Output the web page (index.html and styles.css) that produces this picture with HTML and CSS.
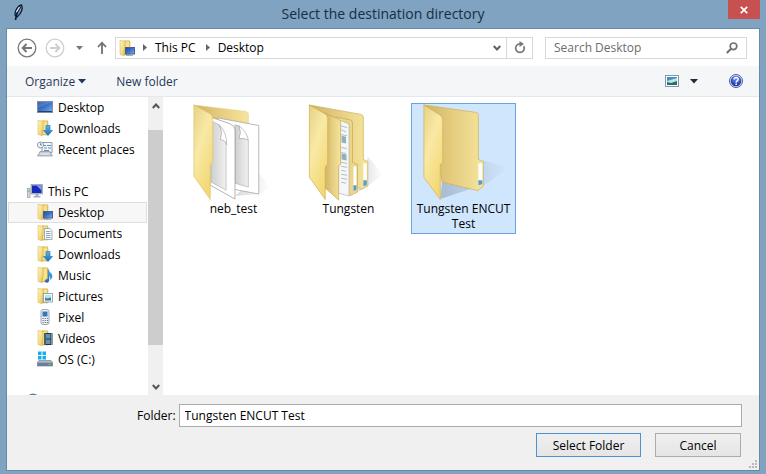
FILE: index.html
```html
<!DOCTYPE html>
<html lang="en">
<head>
<meta charset="utf-8">
<title>Select the destination directory</title>
<link rel="stylesheet" href="styles.css">
</head>
<body>
<svg class="defs" aria-hidden="true">
  <defs>
    <linearGradient id="gold" x1="0" y1="0" x2="1" y2="1"><stop offset="0" stop-color="#fdf3bd"/><stop offset=".5" stop-color="#f6e08a"/><stop offset="1" stop-color="#e2c060"/></linearGradient>
    <linearGradient id="flap" x1="0" y1="0" x2=".6" y2="1"><stop offset="0" stop-color="#e6d285"/><stop offset=".45" stop-color="#f8e9a5"/><stop offset="1" stop-color="#f3d772"/></linearGradient>
    <linearGradient id="inside" x1="0" y1="0" x2="1" y2="0"><stop offset="0" stop-color="#cdb262"/><stop offset=".5" stop-color="#e6cd80"/><stop offset="1" stop-color="#f5e59d"/></linearGradient>
    <linearGradient id="sheet" x1="0" y1="0" x2="1" y2="0"><stop offset="0" stop-color="#cfcfcf"/><stop offset="1" stop-color="#f1f1f1"/></linearGradient>
    <linearGradient id="shade" x1="0" y1="0" x2="1" y2="0"><stop offset="0" stop-color="#2c3a4c" stop-opacity=".38"/><stop offset="1" stop-color="#2c3a4c" stop-opacity="0"/></linearGradient>
    <linearGradient id="screen" x1="0" y1="0" x2="1" y2="1"><stop offset="0" stop-color="#1b459c"/><stop offset=".5" stop-color="#3b74cc"/><stop offset="1" stop-color="#84b3e6"/></linearGradient>
    <linearGradient id="blue" x1="0" y1="0" x2="0" y2="1"><stop offset="0" stop-color="#59baf0"/><stop offset="1" stop-color="#1769bb"/></linearGradient>
    <radialGradient id="ball" cx=".5" cy=".3" r=".7"><stop offset="0" stop-color="#6f8fe8"/><stop offset="1" stop-color="#1a2f9e"/></radialGradient>
    <symbol id="folder" viewBox="0 0 16 16">
      <path d="M5 .8h5.500l.5 1V15H5z" fill="#e3c15c" stroke="#cdac50" stroke-width=".5"/>
      <path d="M6.500 1.500H10V14H6z" fill="#f6e290"/>
      <path d="M1 .3l5 1v8.500l-.8.800v5.200L1 14.500z" fill="url(#gold)" stroke="#d4b251" stroke-width=".5"/>
    </symbol>
    <symbol id="i-desk" viewBox="0 0 16 16">
      <rect x=".5" y="2.500" width="15" height="11" fill="url(#screen)" stroke="#7d8ea8"/>
      <path d="M1 3h14L1 9z" fill="#fff" opacity=".15"/><path d="M1 12.500h14" stroke="#2a3f66"/>
    </symbol>
    <symbol id="i-fdesk" viewBox="0 0 16 16"><use href="#folder"/><rect x="6.500" y="7.500" width="9" height="6.500" fill="url(#screen)" stroke="#46618c"/><path d="M7 15.300h7" stroke="#7fa0c8"/></symbol>
    <symbol id="i-down" viewBox="0 0 16 16"><use href="#folder"/><path d="M9 5.500h4v5h2.500L11 15.500 6.500 10.500H9z" fill="url(#blue)" stroke="#2a7dbf" stroke-width=".7"/></symbol>
    <symbol id="i-recent" viewBox="0 0 16 16">
      <path d="M5 1.500h10v10H5z" fill="#f4f7fa" stroke="#8b9cae"/><path d="M7 4.500h2m1 0h4M7 7h3m1 0h3M7 9.500h5" stroke="#6688aa"/>
      <path d="M3 10.500h10l2.500 4.500H.5z" fill="#c3ccd5" stroke="#8794a2" stroke-width=".7"/><path d="M3.500 13h9" stroke="#edf2f7"/>
      <circle cx="3.500" cy="4" r="3" fill="#f4f7fa" stroke="#8799ad"/><path d="M3.500 2.200V4H5" fill="none" stroke="#506a86" stroke-width=".8"/>
    </symbol>
    <symbol id="i-pc" viewBox="0 0 16 16">
      <rect x=".5" y="5.500" width="2.500" height="9" fill="#d8dde2" stroke="#8c969f" stroke-width=".7"/><path d="M1 8h1.500" stroke="#65a53f"/>
      <rect x="4" y="1.500" width="11.500" height="9.500" fill="#b5c0d0" stroke="#7f8da1" stroke-width=".6"/><rect x="5" y="2.500" width="9.500" height="7.500" fill="#1629ba"/><path d="M9.500 2.500h5v5z" fill="#829ae8"/>
      <path d="M8.500 11h3v2h2v1.500h-7V13h2z" fill="#a6b0bd"/>
    </symbol>
    <symbol id="i-doc" viewBox="0 0 16 16"><use href="#folder"/><path d="M7.500 3.500H13L15 5.500v9H7.500z" fill="#f8fbfd" stroke="#8a9aa9" stroke-width=".8"/><path d="M9 6.500h4.500M9 8.500h4.500M9 10.500h4.500M9 12.500h4.500" stroke="#768da7" stroke-width=".8"/></symbol>
    <symbol id="i-music" viewBox="0 0 16 16"><use href="#folder"/><path d="M11 2c.5 3 4 4 4 7 0 1.500-.5 2.500-1.500 3.500.5-3-1.500-4-1.500-4v5c0 2.500-4 2.500-4 .5 0-1.500 2-2 3-1.500z" fill="url(#blue)" stroke="#286ca5" stroke-width=".4"/></symbol>
    <symbol id="i-pic" viewBox="0 0 16 16"><use href="#folder"/><rect x="6.500" y="5.500" width="9" height="8.500" fill="#f5fbff" stroke="#7c98ae" stroke-width=".8"/><path d="M8 7h6v5.500H8z" fill="#b7e2f0"/><path d="M8 9.500l2 1 4-1v3H8z" fill="#427f9f"/></symbol>
    <symbol id="i-phone" viewBox="0 0 16 16"><rect x="4" y=".5" width="8" height="15" rx="2" fill="#edf0f5" stroke="#8995a8" stroke-width=".8"/><rect x="5.500" y="2.500" width="5" height="5" fill="#3e73b7"/><path d="M5.500 9.500h1.200m1 0h1.200m1 0h1.200m-5.600 2h1.200m1 0h1.200m1 0h1.200m-5.600 2h1.200m1 0h1.200m1 0h1.200" stroke="#65758f"/></symbol>
    <symbol id="i-video" viewBox="0 0 16 16"><use href="#folder"/><rect x="7" y="3" width="8.500" height="12" fill="#29323b"/><path d="M9 4h4.500v4.500H9zM9 9.500h4.500V14H9z" fill="#5996ba"/><path d="M8 3.500v11M14.500 3.500v11" stroke="#dbe4eb" stroke-dasharray="1 1"/></symbol>
    <symbol id="i-drive" viewBox="0 0 16 16"><path d="M1 .5h3.500V4H1zm4.500 0H9V4H5.500zM1 5h3.500v3.500H1zm4.500 0H9v3.500H5.500z" fill="#16aee9"/><path d="M2 9.500h12l1.800 2v3.500H.2v-3.500z" fill="#a9b8c6" stroke="#687a8c" stroke-width=".6"/><path d="M.5 11.700h15V15H.5z" fill="#687f96"/><path d="M11.500 13.300h2.500" stroke="#67df4b"/></symbol>
    <symbol id="i-net" viewBox="0 0 16 16"><circle cx="6" cy="7.500" r="7" fill="#4c86ad"/><path d="M2 5q4-3 8 0" fill="none" stroke="#b8dced"/></symbol>
  </defs>
</svg>

<div class="window">
  <header class="titlebar">
    <svg class="feather" width="16" height="18" viewBox="0 0 16 18" aria-hidden="true"><path d="M4 11C3.500 6 7.500 1.500 10.500 1c1.500 3 .5 8-4.500 12z" fill="#6f9ed2" stroke="#0c1524" stroke-width="1.300"/><path d="M9.500 3Q5.500 8 4.500 16" fill="none" stroke="#0c1524" stroke-width="1.600"/><path d="M8.500 3L5.500 8" stroke="#edf6ff" stroke-width="1.200"/></svg>
    <h1>Select the destination directory</h1>
    <button class="close" type="button" aria-label="Close"><svg width="8" height="8" viewBox="0 0 8 8"><path d="M.8.8l6.400 6.400M7.200.8L.8 7.200" stroke="#fff" stroke-width="1.700"/></svg></button>
  </header>

  <main class="dialog">
    <nav class="navbar" aria-label="Navigation">
      <button class="plain round" type="button" aria-label="Back"><svg width="20" height="20" viewBox="0 0 20 20" fill="none" stroke="#777"><circle cx="10" cy="10" r="8.800" stroke-width="1.300"/><path d="M15 10H6M9.500 6L5.700 10l3.800 4" stroke-width="2"/></svg></button>
      <button class="plain round" type="button" aria-label="Forward"><svg width="20" height="20" viewBox="0 0 20 20" fill="none" stroke="#cfcfcf"><circle cx="10" cy="10" r="8.800" stroke-width="1.300"/><path d="M5 10h9m-3.500-4l3.800 4-3.800 4" stroke-width="2"/></svg></button>
      <button class="plain history" type="button" aria-label="Recent locations"><svg width="7" height="4" viewBox="0 0 7 4"><path d="M0 0h7L3.500 4z" fill="#777"/></svg></button>
      <button class="plain up" type="button" aria-label="Up"><svg width="10" height="13" viewBox="0 0 10 13" fill="none" stroke="#707070" stroke-width="1.800"><path d="M5 13V2M1 6l4-4.300L9 6"/></svg></button>
      <div class="address">
        <svg class="ico" aria-hidden="true"><use href="#i-fdesk"/></svg>
        <svg class="chev" viewBox="0 0 4 7"><path d="M0 0l4 3.500L0 7z"/></svg>
        <a href="#">This PC</a>
        <svg class="chev" viewBox="0 0 4 7"><path d="M0 0l4 3.500L0 7z"/></svg>
        <a href="#">Desktop</a>
        <button class="plain drop" type="button" aria-label="Previous locations"><svg width="8" height="6" viewBox="0 0 8 6"><path d="M.8 1L4 4.500 7.200 1" fill="none" stroke="#606060" stroke-width="2"/></svg></button>
        <button class="plain refresh" type="button" aria-label="Refresh"><svg width="12" height="13" viewBox="0 0 12 13"><path d="M9.800 5.200A4.300 4.300 0 1 1 6 2.800" fill="none" stroke="#777" stroke-width="1.700"/><path d="M5.500 0l4.500 3-4.500 3z" fill="#777"/></svg></button>
      </div>
      <div class="search">
        <input type="search" placeholder="Search Desktop" aria-label="Search Desktop">
        <svg width="12" height="12" viewBox="0 0 12 12" fill="none" stroke="#707070" aria-hidden="true"><circle cx="7.500" cy="4.300" r="3.300" stroke-width="1.700"/><path d="M5 6.800L.8 11" stroke-width="2"/></svg>
      </div>
    </nav>

    <div class="toolbar">
      <button class="plain" type="button">Organize <svg width="8" height="5" viewBox="0 0 8 5"><path d="M0 0h8L4 4.500z" fill="#1e395b"/></svg></button>
      <button class="plain" type="button">New folder</button>
      <button class="plain view" type="button" aria-label="Change your view"><svg width="14" height="12" viewBox="0 0 14 12"><rect x=".5" y=".5" width="13" height="11" fill="#fff" stroke="#8795a5"/><path d="M2 2h10v8H2z" fill="#b5e6f2"/><path d="M2 2h10v1L2 6z" fill="#4b8fc0"/><path d="M2 7l4 1 6-2v4H2z" fill="#26706b"/></svg></button>
      <button class="plain more" type="button" aria-label="More options"><svg width="8" height="5" viewBox="0 0 8 5"><path d="M0 0h8L4 4.500z" fill="#1b2b42"/></svg></button>
      <button class="plain help" type="button" aria-label="Help"><svg width="14" height="14" viewBox="0 0 14 14"><circle cx="7" cy="7" r="6.500" fill="#dce5fa" stroke="#4b5ea9"/><circle cx="7" cy="7" r="5.300" fill="url(#ball)"/><path d="M5 5.500C5 2.700 9.300 3 9.200 5.500 9.100 6.900 7.200 6.800 7.200 8.600M7.200 9.600v1.500" fill="none" stroke="#fff" stroke-width="1.500"/></svg></button>
    </div>

    <div class="body">
      <div class="tree">
        <ul>
          <li><a href="#"><svg class="ico"><use href="#i-desk"/></svg>Desktop</a></li>
          <li><a href="#"><svg class="ico"><use href="#i-down"/></svg>Downloads</a></li>
          <li><a href="#"><svg class="ico"><use href="#i-recent"/></svg>Recent places</a></li>
        </ul>
        <ul>
          <li class="root"><a href="#"><svg class="ico"><use href="#i-pc"/></svg>This PC</a></li>
          <li class="current"><a href="#"><svg class="ico"><use href="#i-fdesk"/></svg>Desktop</a></li>
          <li><a href="#"><svg class="ico"><use href="#i-doc"/></svg>Documents</a></li>
          <li><a href="#"><svg class="ico"><use href="#i-down"/></svg>Downloads</a></li>
          <li><a href="#"><svg class="ico"><use href="#i-music"/></svg>Music</a></li>
          <li><a href="#"><svg class="ico"><use href="#i-pic"/></svg>Pictures</a></li>
          <li><a href="#"><svg class="ico"><use href="#i-phone"/></svg>Pixel</a></li>
          <li><a href="#"><svg class="ico"><use href="#i-video"/></svg>Videos</a></li>
          <li><a href="#"><svg class="ico"><use href="#i-drive"/></svg>OS (C:)</a></li>
        </ul>
        <ul>
          <li class="root"><svg class="ico"><use href="#i-net"/></svg></li>
        </ul>
      </div>
      <div class="scroll">
        <button class="plain" type="button" aria-label="Scroll up"><svg width="8" height="6" viewBox="0 0 8 6"><path d="M.8 5L4 1.500 7.200 5" fill="none" stroke="#555" stroke-width="2"/></svg></button>
        <div class="track"><div class="thumb"></div></div>
        <button class="plain" type="button" aria-label="Scroll down"><svg width="8" height="6" viewBox="0 0 8 6"><path d="M.8 1L4 4.500 7.200 1" fill="none" stroke="#555" stroke-width="2"/></svg></button>
      </div>
      <div class="files">
        <button class="file" type="button">
          <svg class="big" viewBox="0 0 82 98">
            <path d="M42 93l24-2 12-7-12-14z" fill="url(#shade)" opacity=".5"/>
            <path d="M0 1l53 6.500q2.500.5 2.500 3V24L18 20z" fill="url(#inside)" stroke="#e4cf85" stroke-width=".6"/>
            <path d="M24 14l42 7.700V91l-26-5z" fill="#fff" stroke="#9b9b9b" stroke-width=".7"/>
            <path d="M42 21l4 1 8 13 1.500 2v47L42 80z" fill="url(#sheet)" stroke="#aaa" stroke-width=".6"/>
            <path d="M46 22q3 7 0 13 5-1 9.500 1.500Q54 28 46 22z" fill="#fff" stroke="#999" stroke-width=".6"/>
            <path d="M17 13l20 7q5 2 5 6v70L17 82z" fill="#fff" stroke="#929292" stroke-width=".7"/>
            <path d="M18 17l8 4 7 19v47l-15-8z" fill="url(#sheet)" stroke="#aaa" stroke-width=".6"/>
            <path d="M26 21q4 7 1 15 5 0 6.500 5Q34 29 26 21z" fill="#fff" stroke="#999" stroke-width=".6"/>
            <path d="M.5 1L17 10q2.500 1.500 2.500 4v45q-2.500 1-2.500 4v33.500L.5 73z" fill="url(#flap)" stroke="#dfc56d" stroke-width=".7"/>
          </svg>
          <span>neb_test</span>
        </button>
        <button class="file" type="button">
          <svg class="big" viewBox="0 0 82 98">
            <path d="M50 89l10-6 15-12-15-18z" fill="url(#shade)" opacity=".5"/>
            <path d="M1 1l52 9.500q2.500.5 2.500 3V56l4.500 2v25l-6 3L19 75z" fill="url(#inside)" stroke="#cdb05b" stroke-width=".7"/>
            <path d="M55.500 60h3.500v22l-3.500 1z" fill="#fff"/><path d="M55.500 77h3.500v5l-3.500 1z" fill="#5b9bc8"/>
            <path d="M28 13l14 3q2.500.5 2.500 3v40l5 2v28l-7 3.500L28 86z" fill="#ecd689" stroke="#c5a750" stroke-width=".7"/>
            <path d="M45.500 63h3v24l-3 1z" fill="#fff"/><path d="M45.500 82h3v5l-3 1z" fill="#5b9bc8"/>
            <path d="M30 16l11 4v73l-11-3z" fill="#f4f6f7" stroke="#a6a9aa" stroke-width=".6"/>
            <path d="M33 22l6 2m-6 2l5 2m-5 3l6 1m-6 12l6 1m-6 4l5 1m-5 9l6 1m-6 3l6 1m-6 3l5 1m-5 3l6 1m-6 3l6 1m-6 3l5 1" stroke="#b4bcc8"/>
            <path d="M33.500 32l4.500 1v7l-4.500-1zm0 18l5 1v6l-5-1z" fill="#8db3b8"/>
            <path d="M16 9l14 6q2.500 1 2.500 4v42q-2 .5-2 3v33L16 84z" fill="url(#inside)" stroke="#c5a750" stroke-width=".7"/>
            <path d="M1 1l16 9q2.500 1.500 2.500 4v47q-2.500 1-2.500 4v31.500L1 74z" fill="url(#flap)" stroke="#cfae50" stroke-width=".7"/>
          </svg>
          <span>Tungsten</span>
        </button>
        <button class="file selected" type="button">
          <svg class="big" viewBox="0 0 82 98">
            <path d="M17 96L50 85l11-3 25-17-25-8-42 22z" fill="url(#shade)" opacity=".65"/>
            <path d="M.5 1L53 8.500q2.500.5 2.500 3V56l5 2v25l-5.500 4.500L19 79z" fill="url(#inside)" stroke="#d0ae50" stroke-width=".7"/>
            <path d="M55.500 60h4v21l-4 1z" fill="#fff"/><path d="M55.500 77h4v4l-4 1z" fill="#5b9bc8"/>
            <path d="M.5 1l16 10q3 2 3 5v43q-2.500 1-2.500 4v33.500L.5 74z" fill="url(#flap)" stroke="#d3b153" stroke-width=".7"/>
          </svg>
          <span>Tungsten ENCUT Test</span>
        </button>
      </div>
    </div>

    <footer class="footer">
      <div class="field">
        <label for="folder-name">Folder:</label>
        <input id="folder-name" type="text" value="Tungsten ENCUT Test">
      </div>
      <div class="actions">
        <button class="btn primary" type="button">Select Folder</button>
        <button class="btn" type="button">Cancel</button>
      </div>
      <svg class="grip" width="8" height="8" viewBox="0 0 8 8" aria-hidden="true"><path d="M6 0h2v2H6zM3 3h2v2H3zM6 3h2v2H6zM0 6h2v2H0zM3 6h2v2H3zM6 6h2v2H6z" fill="#b9b9b9"/></svg>
    </footer>
  </main>
</div>
</body>
</html>
```
FILE: styles.css
```css
* { box-sizing: border-box; }

body {
  margin: 0;
  background: #7fa3c1;
  color: #000;
  font: 12px/15px "Open Sans", "Noto Sans", sans-serif;
}

button, input { font: inherit; color: inherit; }
a { color: inherit; text-decoration: none; }
svg { display: block; flex: none; }
.defs { position: absolute; width: 0; height: 0; }

.plain {
  display: flex;
  align-items: center;
  justify-content: center;
  padding: 0;
  border: 0;
  background: none;
}

.ico { width: 16px; height: 16px; }

.window {
  display: flex;
  flex-direction: column;
  height: 100vh;
  padding: 0 6px 3px;
}

.titlebar {
  display: grid;
  grid-template-columns: 32px 1fr 32px;
  height: 28px;
}
.feather { margin: 4px 0 0 5px; }
.titlebar h1 {
  margin: 0;
  color: #182d42;
  font-size: 14px;
  font-weight: 400;
  line-height: 27px;
  text-align: center;
}
.close {
  display: flex;
  align-items: center;
  justify-content: center;
  height: 19px;
  padding: 0;
  border: 0;
  background: #c75050;
}

.dialog {
  display: flex;
  flex: 1;
  flex-direction: column;
  min-height: 0;
  border: 1px solid #6b89a3;
  background: #fff;
}

.navbar {
  display: flex;
  align-items: center;
  height: 37px;
  padding: 0 12px 0 10px;
}
.round + .round { margin-left: 8px; }
.history { width: 28px; }
.up { width: 18px; }
.address, .search {
  display: flex;
  align-items: center;
  height: 22px;
  border: 1px solid #d9d9d9;
  background: #fff;
}
.address { flex: 1; margin-left: 4px; padding-left: 3px; }
.address a { margin: 0 8px; }
.chev { width: 4px; height: 7px; margin-left: 8px; fill: #666; }
.address a + .chev { margin-left: 2px; }
.drop { width: 18px; height: 20px; margin-left: auto; }
.refresh { width: 26px; height: 20px; border-left: 1px solid #d9d9d9; }
.search { width: 202px; margin-left: 12px; padding-right: 8px; }
.search input {
  flex: 1;
  min-width: 0;
  padding: 0 8px;
  border: 0;
  outline: 0;
  background: none;
}
.search input::placeholder { color: #6d6d6d; opacity: 1; }

.toolbar {
  display: flex;
  align-items: center;
  height: 31px;
  padding: 0 16px 0 18px;
  border-bottom: 1px solid #e4e8ee;
  background: #f5f6f7;
  color: #1e395b;
}
.toolbar .plain { gap: 3px; margin-right: 30px; }
.toolbar .view { margin: 0 11px 0 auto; }
.toolbar .more { margin-right: 31px; }
.toolbar .help { margin-right: 0; }

.body { display: flex; flex: 1; min-height: 0; }
.tree { width: 141px; overflow: hidden; }
.tree ul { margin: 0 0 21px; padding: 0; list-style: none; }
.tree li { height: 21px; margin: 0 1px; padding: 2px 0 0 29px; }
.tree a { display: flex; align-items: center; gap: 5px; height: 16px; }
.tree .root { padding-left: 19px; }
.tree .current { padding: 1px 0 0 28px; border: 1px solid #dedede; background: #f7f7f7; }

.scroll {
  display: flex;
  flex-direction: column;
  width: 15px;
  background: #f0f0f0;
}
.scroll .plain { height: 17px; }
.track { flex: 1; padding: 16px 0 33px; }
.thumb { height: 100%; background: #cdcdcd; }

.files {
  display: flex;
  flex: 1;
  flex-wrap: wrap;
  align-content: flex-start;
  align-items: flex-start;
  gap: 10px;
  padding: 6px 0 0 18px;
}
.file {
  display: block;
  width: 105px;
  padding: 0 0 2px;
  border: 1px solid transparent;
  background: none;
  line-height: 15px;
  text-align: center;
}
.file span { display: block; }
.file.selected { border-color: #6aa5de; background: #d0e6fd; }
.big { width: 82px; height: 97px; margin-left: 11px; overflow: visible; }

.footer {
  position: relative;
  height: 75px;
  padding: 9px 17px 0 130px;
  background: #f0f0f0;
}
.field { display: flex; align-items: center; gap: 3px; }
.field input {
  flex: 1;
  min-width: 0;
  height: 23px;
  padding: 0 5px;
  border: 1px solid #ababab;
  background: #fff;
}
.actions {
  display: flex;
  justify-content: flex-end;
  gap: 14px;
  margin-top: 6px;
  padding-right: 1px;
}
.btn {
  width: 86px;
  height: 24px;
  padding: 0;
  border: 1px solid #acacac;
  background: linear-gradient(#f0f0f0, #e5e5e5);
}
.btn.primary { width: 105px; border-color: #4a94d6; }
.grip { position: absolute; right: 2px; bottom: 2px; }
```
